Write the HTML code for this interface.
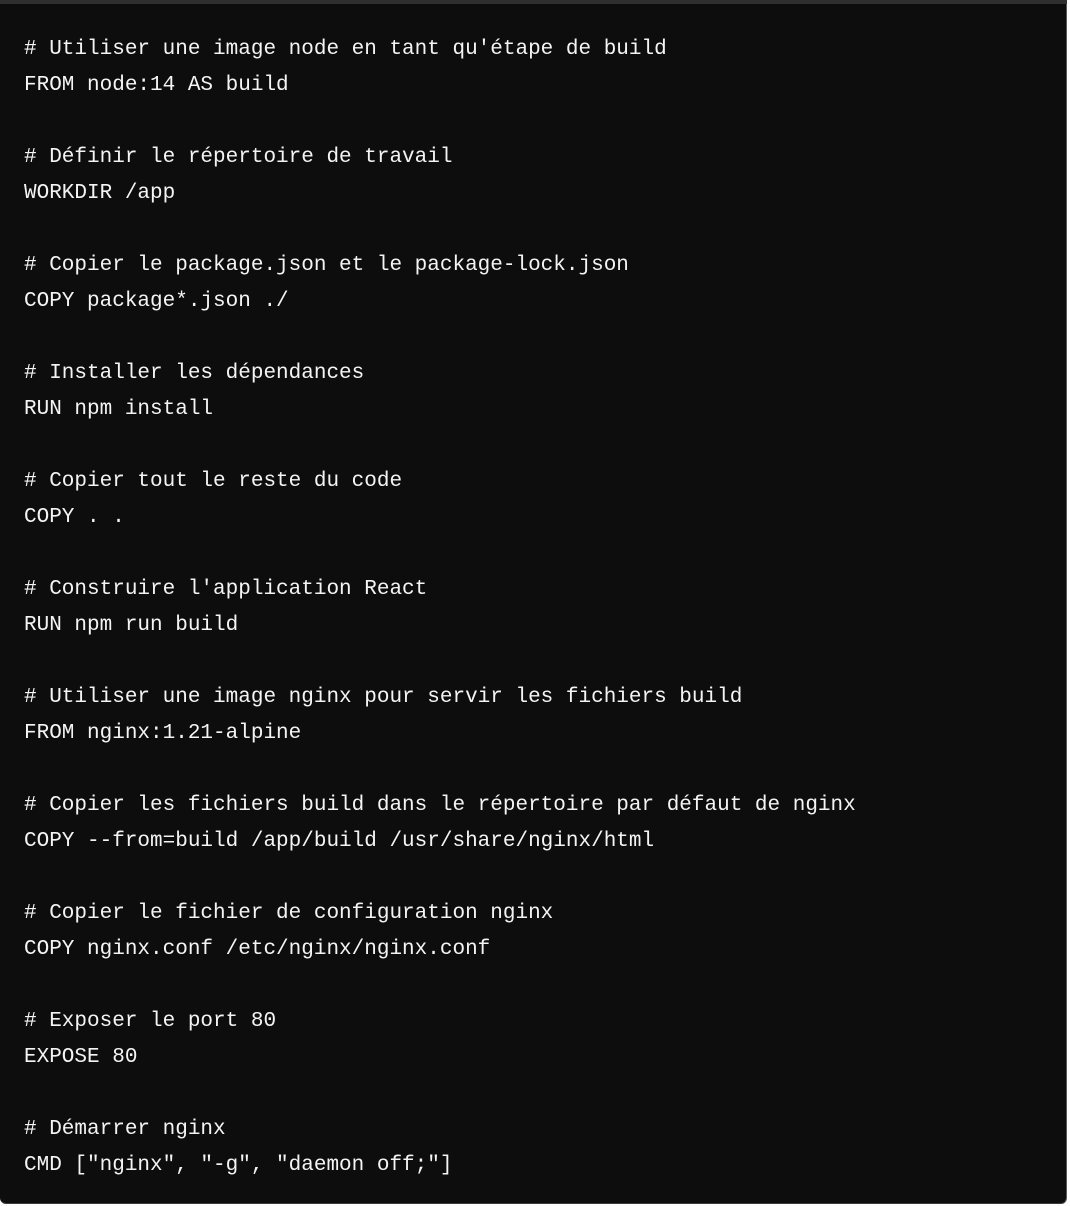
<!DOCTYPE html>
<html><head><meta charset="utf-8"><style>
html,body{margin:0;padding:0;background:#fff;width:1070px;height:1206px;overflow:hidden}
.box{position:absolute;left:0;top:0;width:1067px;height:1204px;background:#0d0d0d;border-radius:0 0 6px 6px;border-right:1px solid #5a5a5a;border-bottom:1px solid #3a3a3a;box-sizing:border-box}
.bar{position:absolute;left:0;top:0;width:1067px;height:4px;background:#2f2f2f}
pre{position:absolute;left:24px;top:32px;margin:0;font-family:"Liberation Mono",monospace;font-size:21px;line-height:36px;color:#f4f4f4;white-space:pre}
</style></head><body>
<div class="box"></div><div class="bar"></div>
<pre># Utiliser une image node en tant qu'étape de build
FROM node:14 AS build

# Définir le répertoire de travail
WORKDIR /app

# Copier le package.json et le package-lock.json
COPY package*.json ./

# Installer les dépendances
RUN npm install

# Copier tout le reste du code
COPY . .

# Construire l'application React
RUN npm run build

# Utiliser une image nginx pour servir les fichiers build
FROM nginx:1.21-alpine

# Copier les fichiers build dans le répertoire par défaut de nginx
COPY --from=build /app/build /usr/share/nginx/html

# Copier le fichier de configuration nginx
COPY nginx.conf /etc/nginx/nginx.conf

# Exposer le port 80
EXPOSE 80

# Démarrer nginx
CMD ["nginx", "-g", "daemon off;"]</pre>
</body></html>
